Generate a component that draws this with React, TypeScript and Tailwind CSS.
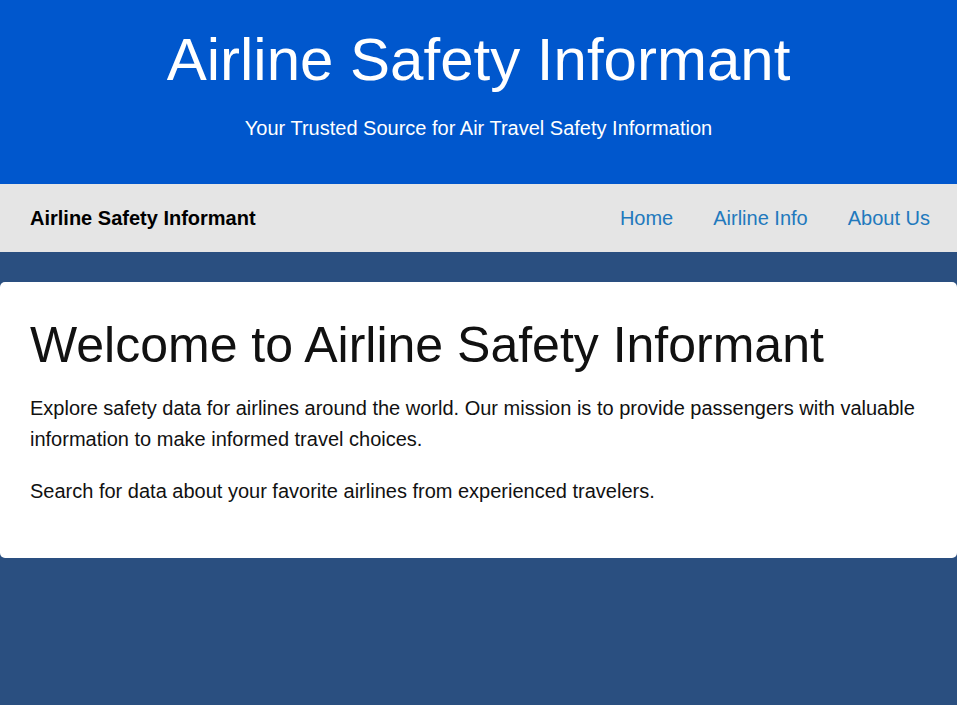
const App = () => {
  const links = ["Home", "Airline Info", "About Us"];

  return (
    <div className="min-h-screen bg-[#2a4f80] font-['Liberation_Sans',Arial,sans-serif]">
      {/* Header */}
      <header className="bg-[#0057cd] pt-[25px] pb-[44px] text-center text-white">
        <h1 className="text-[60px] leading-[69px]">Airline Safety Informant</h1>
        <p className="mt-[23px] text-[20px] leading-[23px]">
          Your Trusted Source for Air Travel Safety Information
        </p>
      </header>

      {/* Nav */}
      <nav className="flex h-[68px] items-center justify-between bg-[#e5e5e5] pl-[30px] pr-[27px]">
        <span className="text-[20px] font-bold text-black">Airline Safety Informant</span>
        <ul className="flex gap-[40px]">
          {links.map((link) => (
            <li key={link}>
              <a href="#" className="text-[20px] text-[#2279bd]">
                {link}
              </a>
            </li>
          ))}
        </ul>
      </nav>

      {/* Main */}
      <main className="pt-[30px]">
        <section className="rounded-[5px] bg-white px-[30px] pt-[35px] pb-[30px] text-[#111]">
          <h2 className="text-[50px] leading-[57px]">Welcome to Airline Safety Informant</h2>
          <p className="mt-[19px] mb-[21px] text-[20px] leading-[31px]">
            Explore safety data for airlines around the world. Our mission is to provide passengers with valuable
            information to make informed travel choices.
          </p>
          <p className="mb-[21px] text-[20px] leading-[31px]">
            Search for data about your favorite airlines from experienced travelers.
          </p>
        </section>
      </main>
    </div>
  );
};

export default App;
